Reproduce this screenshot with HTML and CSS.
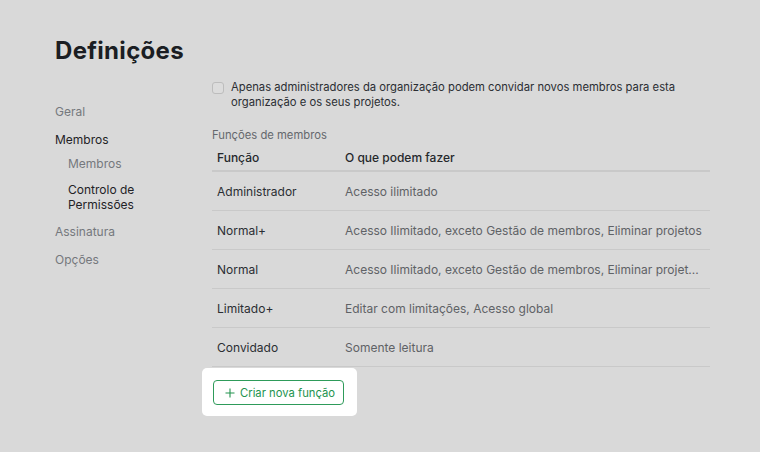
FILE: index.html
```html
<!DOCTYPE html>
<html lang="pt">
<head>
<meta charset="utf-8">
<link rel="stylesheet" href="styles.css">
</head>
<body>
<div class="page">
  <h1 class="title">Definições</h1>
  <div class="layout">
    <nav class="side">
      <div class="nav-item muted">Geral</div>
      <div class="nav-item nav-parent strong">Membros</div>
      <div class="nav-sub muted">Membros</div>
      <div class="nav-sub nav-multi strong">Controlo de<br>Permissões</div>
      <div class="nav-item muted">Assinatura</div>
      <div class="nav-item muted">Opções</div>
    </nav>
    <main class="main">
      <label class="check-row">
        <span class="checkbox"></span>
        <span class="check-text">Apenas administradores da organização podem convidar novos membros para esta organização e os seus projetos.</span>
      </label>
      <div class="section-label">Funções de membros</div>
      <table class="roles">
        <thead>
          <tr><th class="c1">Função</th><th>O que podem fazer</th></tr>
        </thead>
        <tbody>
          <tr><td class="c1">Administrador</td><td class="desc">Acesso ilimitado</td></tr>
          <tr><td class="c1">Normal+</td><td class="desc">Acesso Ilimitado, exceto Gestão de membros, Eliminar projetos</td></tr>
          <tr><td class="c1">Normal</td><td class="desc"><span class="trunc">Acesso Ilimitado, exceto Gestão de membros, Eliminar projet...</span></td></tr>
          <tr><td class="c1">Limitado+</td><td class="desc">Editar com limitações, Acesso global</td></tr>
          <tr><td class="c1">Convidado</td><td class="desc">Somente leitura</td></tr>
        </tbody>
      </table>
      <div class="highlight">
        <button class="btn"><svg class="plus" width="10" height="10" viewBox="0 0 10 10"><path d="M5 0.5V9.5M0.5 5H9.5" stroke="currentColor" stroke-width="1.1" fill="none"/></svg>Criar nova função</button>
      </div>
    </main>
  </div>
</div>
</body>
</html>
```
FILE: styles.css
```css
html, body {
  margin: 0;
  padding: 0;
  background: #d9d9d9;
  font-family: Inter, "Noto Sans", sans-serif;
  color: #2b2e33;
}
.page {
  padding: 36px 50px 0 55px;
}
.title {
  margin: 0;
  font-size: 24px;
  line-height: 30px;
  font-weight: 700;
  color: #1b1e23;
  letter-spacing: 0.3px;
}
.layout {
  display: flex;
  margin-top: 14px;
}
.side {
  width: 157px;
  flex: none;
  padding-top: 24px;
  font-size: 12px;
}
.nav-item {
  line-height: 16px;
  margin-bottom: 12px;
}
.nav-parent {
  margin-bottom: 8px;
}
.nav-sub {
  padding-left: 13px;
  line-height: 16px;
  margin-bottom: 9.5px;
}
.nav-multi {
  line-height: 15px;
  margin-bottom: 12.5px;
}
.muted { color: #75787d; }
.strong { color: #1f2226; }
.main {
  width: 498px;
  font-size: 12px;
}
.check-row {
  display: flex;
  gap: 7px;
  align-items: flex-start;
}
.checkbox {
  flex: none;
  width: 10px;
  height: 10px;
  margin-top: 2px;
  border: 1px solid #bdbdbd;
  border-radius: 3px;
  background: #dcdcdc;
}
.check-text {
  font-size: 11.25px;
  line-height: 15px;
  color: #2b2e33;
  width: 470px;
}
.section-label {
  margin-top: 18px;
  color: #65686d;
  font-size: 11.25px;
  line-height: 15px;
}
.roles {
  width: 100%;
  table-layout: fixed;
  border-collapse: collapse;
  margin-top: 4px;
}
.roles th, .roles td {
  box-sizing: border-box;
}
.roles th {
  text-align: left;
  font-weight: 500;
  color: #25282c;
  padding: 3px 5px 5px;
  line-height: 15px;
  border-bottom: 2px solid #c9c9c9;
}
.roles td {
  padding: 12px 5px 11px;
  line-height: 15px;
  height: 39px;
  border-bottom: 1px solid #c9c9c9;
  color: #2b2e33;
}
.roles .c1 { width: 128px; }
.roles td.desc { color: #5f6266; }
.trunc {
  display: block;
  white-space: nowrap;
}
.highlight {
  display: inline-block;
  margin-left: -10px;
  margin-top: 1px;
  padding: 12px 13px 11px 11px;
  background: #ffffff;
  border-radius: 5px;
}
.btn {
  display: flex;
  align-items: center;
  box-sizing: border-box;
  height: 25px;
  width: 131px;
  padding: 0 0 0 11px;
  border: 1px solid #2e9b5a;
  border-radius: 4px;
  background: #fff;
  color: #23934f;
  font-family: Inter, "Noto Sans", sans-serif;
  font-size: 11.25px;
  white-space: nowrap;
}
.plus {
  flex: none;
  margin-right: 5px;
}
```
